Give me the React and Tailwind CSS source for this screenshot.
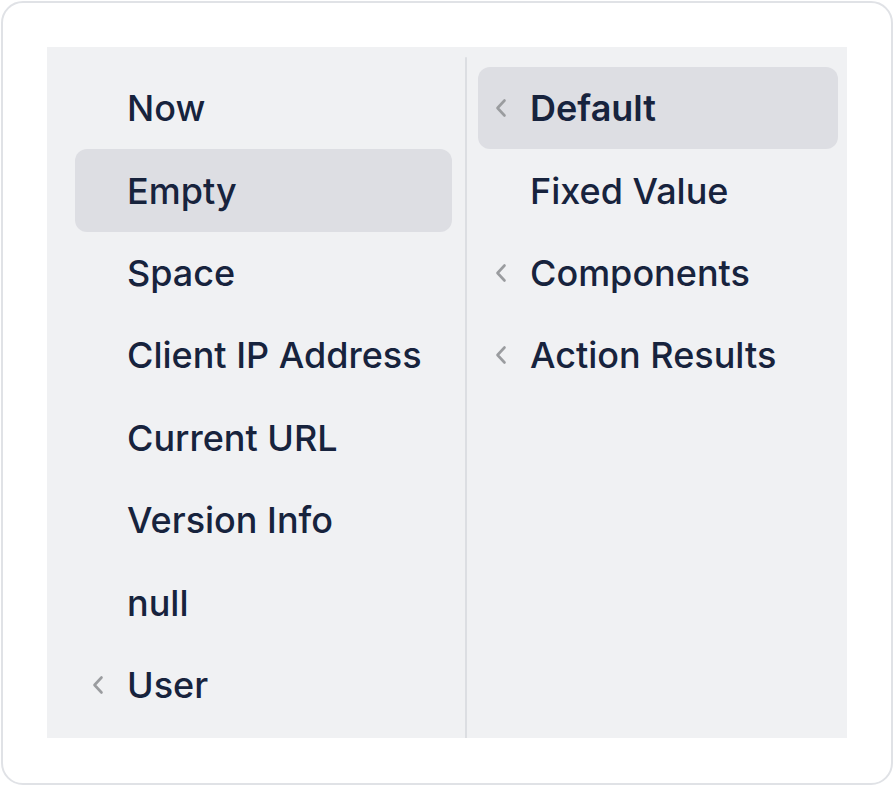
import React from 'react';

const leftItems = [
  { label: 'Now' },
  { label: 'Empty', active: true },
  { label: 'Space' },
  { label: 'Client IP Address' },
  { label: 'Current URL' },
  { label: 'Version Info' },
  { label: 'null' },
  { label: 'User', nested: true },
];

const rightItems = [
  { label: 'Default', nested: true, active: true, bold: true },
  { label: 'Fixed Value' },
  { label: 'Components', nested: true },
  { label: 'Action Results', nested: true },
];

const Chevron = () => (
  <svg width="14" height="20" viewBox="0 0 14 20" fill="none" className="absolute left-[16px] top-1/2 -translate-y-1/2">
    <path d="M10.5 2.5 L3.5 10 L10.5 17.5" stroke="#9a9c9f" strokeWidth="2.6" strokeLinecap="round" strokeLinejoin="round" />
  </svg>
);

const Row = ({ item }) => (
  <div
    className={`relative flex items-center h-[82.4px] pl-[52px] rounded-[12px] ${
      item.active ? 'bg-[#dddee3]' : ''
    }`}
  >
    {item.nested && <Chevron />}
    <span className={`text-[36px] leading-none text-[#17233d] ${item.bold ? 'font-semibold' : 'font-medium'}`}>
      {item.label}
    </span>
  </div>
);

const App = () => {
  return (
    <div className="w-[894px] h-[786px] p-px bg-white" style={{ fontFamily: 'Inter, "Noto Sans", sans-serif' }}>
      <div className="w-[892px] h-[784px] border-2 border-[#e0e2e6] rounded-[22px] bg-white p-[44px]">
        <div className="w-[800px] h-[691px] bg-[#f0f1f3] flex">
          {/* left menu */}
          <div className="w-[418px] pt-[20px] pl-[28px] pr-[13px]">
            {leftItems.map((item) => (
              <Row key={item.label} item={item} />
            ))}
          </div>
          <div className="w-[2px] mt-[10px] bg-[#dcdee2] rounded-t-full" />
          {/* right menu */}
          <div className="w-[380px] pt-[20px] pl-[11px] pr-[9px]">
            {rightItems.map((item) => (
              <Row key={item.label} item={item} />
            ))}
          </div>
        </div>
      </div>
    </div>
  );
};

export default App;
